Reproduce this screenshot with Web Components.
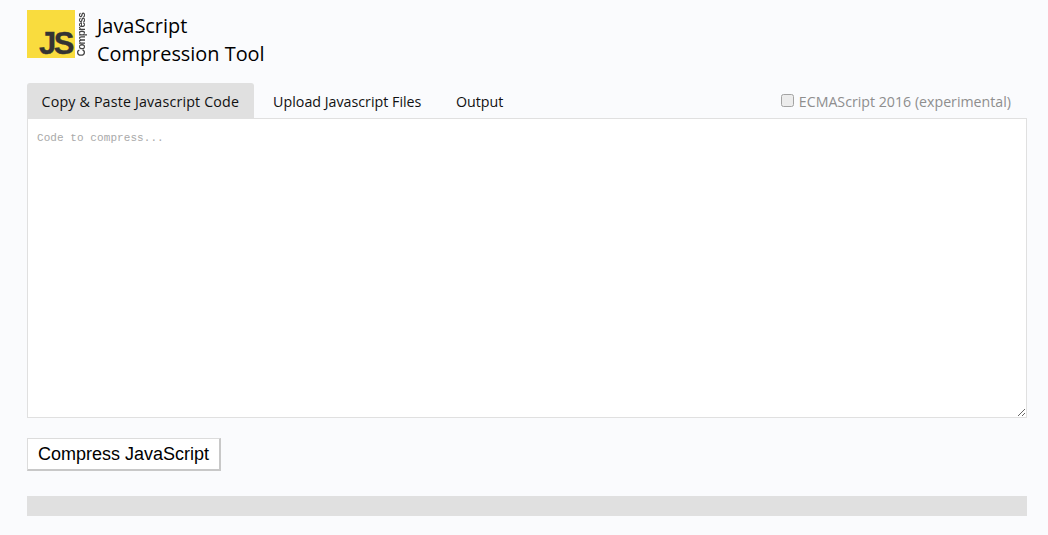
<!DOCTYPE html>
<html><head><meta charset="utf-8"><style>
html,body{margin:0;padding:0;background:#fafbfd;height:100%;overflow:hidden}
</style></head><body>
<compress-app></compress-app>
<script>
function el(name, html){customElements.define(name,class extends HTMLElement{constructor(){super();this.attachShadow({mode:'open'}).innerHTML=html;}});}
el('js-logo',`<style>
:host{display:flex;width:60px;height:48px;flex:none;background:#fff}
.y{width:48px;height:48px;background:#f9dc3e;display:flex;align-items:flex-end;justify-content:flex-end;box-sizing:border-box;padding:0 1px 3px 0}
.j{font:700 31px/23px "Liberation Sans",sans-serif;color:#333;letter-spacing:-2.4px;-webkit-text-stroke:.4px #333;padding-right:2px}
.s{width:12px;height:48px;display:flex;align-items:flex-end;justify-content:center;padding:0 0 2px 1px;box-sizing:border-box}
.c{display:block;writing-mode:vertical-rl;transform:rotate(180deg);font:700 10px/12px "Liberation Sans",sans-serif;color:#444;letter-spacing:-.7px;white-space:nowrap;filter:blur(.25px)}
</style><div class="y"><span class="j">JS</span></div><div class="s"><span class="c">Compress</span></div>`);
el('site-header',`<style>
:host{display:flex;gap:10px;align-items:flex-start;height:83px;box-sizing:border-box;padding-top:10px}
h1{margin:0;font:400 19.9px/28px "Open Sans",sans-serif;color:#000;padding-top:2px}
</style><js-logo></js-logo><h1>JavaScript<br>Compression Tool</h1>`);
el('tab-item',`<style>
:host{display:block;height:35px;box-sizing:border-box;padding:0 14.5px;margin-right:5.5px;font:14.25px/37px "Open Sans",sans-serif;color:#111;border-radius:3px 3px 0 0;white-space:nowrap}
:host([active]){background:#e0e0e0;letter-spacing:.17px;margin-right:5px}
</style><slot></slot>`);
el('tab-bar',`<style>
:host{display:flex;align-items:flex-start;height:35px}
.sp{flex:1}
label{display:flex;align-items:center;height:35px;font:14.2px "Open Sans",sans-serif;color:#8e8e8e;padding-right:16px;padding-top:2px;box-sizing:border-box}
input{appearance:none;-webkit-appearance:none;box-sizing:border-box;margin:0 5px 0 0;width:13px;height:13px;position:relative;top:-1px;background:#ececec;border:1px solid #a3a3a3;border-radius:2.5px}
</style><slot></slot><div class="sp"></div><label><input type="checkbox">ECMAScript 2016 (experimental)</label>`);
el('code-box',`<style>
:host{display:block}
textarea{display:block;box-sizing:border-box;width:100%;height:300px;margin:0;padding:12px 9px 10px;border:1px solid #e0e0e0;background:#fff;outline:none;font:11px/15px "Liberation Mono",monospace;letter-spacing:.07px;resize:vertical}
textarea::placeholder{color:#a9a9a9;opacity:1}
</style><textarea placeholder="Code to compress..."></textarea>`);
el('compress-button',`<style>
:host{display:inline-block}
button{display:block;width:194px;height:33px;box-sizing:border-box;padding:0;background:#fff;border:1px solid #dcdcdc;border-right:2px solid #c8c8c8;border-bottom:2px solid #c8c8c8;font:18px "Liberation Sans",sans-serif;color:#000;cursor:pointer}
</style><button><slot></slot></button>`);
el('progress-bar',`<style>:host{display:block;height:20px;background:#e0e0e0}</style>`);
el('compress-app',`<style>
:host{display:block;padding:0 21px 0 27px}
compress-button{margin-top:20px;display:block}
progress-bar{margin-top:25px}
</style>
<site-header></site-header>
<tab-bar><tab-item active>Copy &amp; Paste Javascript Code</tab-item><tab-item>Upload Javascript Files</tab-item><tab-item>Output</tab-item></tab-bar>
<code-box></code-box>
<compress-button>Compress JavaScript</compress-button>
<progress-bar></progress-bar>`);
</script>
</body></html>
